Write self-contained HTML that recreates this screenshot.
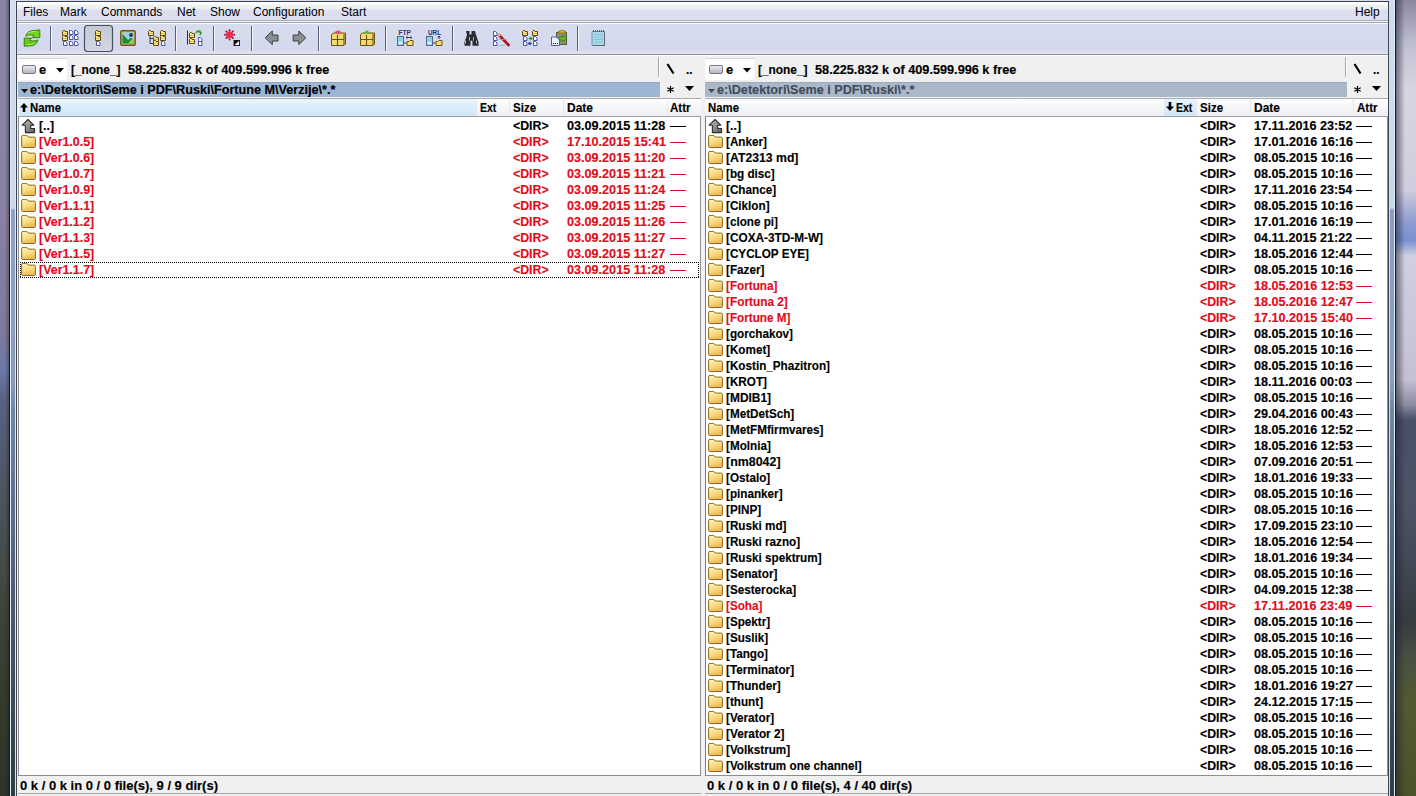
<!DOCTYPE html><html><head><meta charset='utf-8'><style>
*{margin:0;padding:0;box-sizing:border-box}
html,body{width:1416px;height:796px;overflow:hidden;position:relative;background:#808090;font-family:"Liberation Sans",sans-serif}
.a{position:absolute}
.t{position:absolute;white-space:pre;font:bold 13px/16px "Liberation Sans",sans-serif;color:#000;-webkit-text-stroke:0.15px currentColor}
.m{position:absolute;white-space:pre;font:12px/16px "Liberation Sans",sans-serif;color:#000}
.red{color:#e00c1c}
</style></head><body><svg width="0" height="0" style="position:absolute"><defs>
<linearGradient id="fg" x1="0" y1="0" x2="0.3" y2="1"><stop offset="0" stop-color="#fff3b0"/><stop offset="0.5" stop-color="#fbe08a"/><stop offset="1" stop-color="#f0bc58"/></linearGradient>
<linearGradient id="ag" x1="0" y1="0" x2="1" y2="1"><stop offset="0" stop-color="#c8c8c8"/><stop offset="1" stop-color="#5c5c5c"/></linearGradient>
<symbol id="fo" viewBox="0 0 15 14"><path d="M0.6 1.6Q0.6 0.4 1.8 0.4L5.8 0.4L7.3 2.1L13.2 2.1Q14.4 2.1 14.4 3.3L14.4 11.3Q14.4 12.5 13.2 12.5L1.8 12.5Q0.6 12.5 0.6 11.3Z" fill="url(#fg)" stroke="#8a6a2a" stroke-width="1"/></symbol>
<symbol id="up" viewBox="0 0 15 15"><path d="M7 0.5L1.2 6.2L4.4 6.2L4.4 13.6L13.6 13.6L13.6 9.5L9.7 9.5L9.7 6.2L12.8 6.2Z" fill="url(#ag)" stroke="#2e2e2e" stroke-width="1.1" stroke-linejoin="round"/></symbol>
</defs></svg>
<div class="a" style="left:0px;top:0px;width:9px;height:796px;background:linear-gradient(90deg,rgba(0,0,0,0) 5px,rgba(20,20,40,.35) 9px),linear-gradient(#8c84a4 0,#8a82a2 200px,#7e7a9a 330px,#6a78a8 372px,#5a6282 400px,#4e5664 480px,#464c48 560px,#3c4236 620px,#343a2c 700px,#2e3428 796px)"></div>
<div class="a" style="left:1396px;top:0px;width:20px;height:796px;background:linear-gradient(90deg,rgba(30,30,50,.55),rgba(30,30,50,0) 9px),linear-gradient(#8c88a0 0,#c0c0d2 45px,#d6d6e2 90px,#d0cede 190px,#8e9cd0 222px,#7890d0 240px,#d0d0e0 256px,#c4c0d4 380px,#8a8aa0 405px,#485068 420px,#4c5466 500px,#424a58 560px,#363c40 620px,#4a5040 660px,#525a32 700px,#4a5228 796px)"></div>
<div class="a" style="left:9px;top:0px;width:1px;height:796px;background:#141a28"></div>
<div class="a" style="left:1395px;top:0px;width:1px;height:796px;background:#141a28"></div>
<div class="a" style="left:10px;top:0px;width:6px;height:796px;background:linear-gradient(#d2deee 0,#ccd8ea 208px,#92a2c4 210px,#8a9cbe 380px,#7088a8 410px,#5e7290 500px,#485a6c 620px,#3a4a56 720px,#2e3c46 796px);border-left:1px solid #e4ecf8;border-right:1px solid #dce6f4"></div>
<div class="a" style="left:1389px;top:0px;width:6px;height:796px;background:linear-gradient(#cfdcee 0,#c8d8ec 208px,#8c9cc4 210px,#8aa0c0 380px,#7088a8 410px,#5e7290 500px,#485a6c 620px,#3a4a56 720px,#2e3c46 796px);border-left:1px solid #d0e0f4;border-right:1px solid #dcecf8"></div>
<div class="a" style="left:16px;top:1px;width:1373px;height:795px;background:#f0f0f0;border:1px solid #3c4650;border-bottom:none"></div>
<div class="a" style="left:17px;top:2px;width:1371px;height:18px;background:linear-gradient(#ffffff 0,#fcfdfc 2px,#f0f3f2 3px,#eef1f2 6px,#e0e2f1 8px,#dcdef0 10px,#dddff1 100%)"></div>
<div class="a" style="left:10px;top:0px;width:1385px;height:1px;background:#dadcf2"></div>
<div class="a" style="left:17px;top:20px;width:1371px;height:1px;background:#a8acb4"></div>
<div class="a" style="left:17px;top:21px;width:1371px;height:1px;background:#f4f6fa"></div>
<div class="a" style="left:17px;top:22px;width:1371px;height:1px;background:#9ea4ac"></div>
<div class="a" style="left:17px;top:23px;width:1371px;height:1px;background:#f8f9fc"></div>
<div class="m" style="left:23px;top:4px;">Files</div>
<div class="m" style="left:60px;top:4px;">Mark</div>
<div class="m" style="left:101px;top:4px;">Commands</div>
<div class="m" style="left:177px;top:4px;">Net</div>
<div class="m" style="left:210px;top:4px;">Show</div>
<div class="m" style="left:253px;top:4px;">Configuration</div>
<div class="m" style="left:341px;top:4px;">Start</div>
<div class="m" style="left:1355px;top:4px;">Help</div>
<div class="a" style="left:17px;top:24px;width:1371px;height:30px;background:linear-gradient(#d8dcef 0,#d4d8ec 85%,#dfe2ee 100%)"></div>
<div class="a" style="left:17px;top:54px;width:1371px;height:1px;background:#8c9098"></div>
<div class="a" style="left:17px;top:55px;width:1371px;height:1px;background:#ffffff"></div>
<svg class="a" style="left:0;top:0" width="640" height="56" viewBox="0 0 640 56"><path d="M25.8 36.2C26.8 32.2 30 30.4 34 30.6L39.8 29.9V37.7H32.2L34.2 35.6C31.2 34.4 28 34.8 25.8 36.2Z" fill="#74d41a" stroke="#3a8418" stroke-width="1" stroke-linejoin="round"/><path d="M24.2 38.1H31.6L29.6 40.3C32.6 41.4 35.6 41.2 38 39.8C37 44 33.6 46.2 29.6 45.9L24.2 46.2Z" fill="#66cc10" stroke="#3a8418" stroke-width="1" stroke-linejoin="round"/><path d="M28.5 33.2C30.5 31.8 33 31.5 36 31.6M26.5 44.5C29 44.8 32 44.5 34.5 43" stroke="#b4f060" stroke-width="1" fill="none"/><rect x="50" y="26" width="1" height="25" fill="#586078"/><rect x="51" y="26" width="1" height="25" fill="#f4f6fb"/><rect x="175" y="26" width="1" height="25" fill="#586078"/><rect x="176" y="26" width="1" height="25" fill="#f4f6fb"/><rect x="213" y="26" width="1" height="25" fill="#586078"/><rect x="214" y="26" width="1" height="25" fill="#f4f6fb"/><rect x="251" y="26" width="1" height="25" fill="#586078"/><rect x="252" y="26" width="1" height="25" fill="#f4f6fb"/><rect x="318" y="26" width="1" height="25" fill="#586078"/><rect x="319" y="26" width="1" height="25" fill="#f4f6fb"/><rect x="385" y="26" width="1" height="25" fill="#586078"/><rect x="386" y="26" width="1" height="25" fill="#f4f6fb"/><rect x="452" y="26" width="1" height="25" fill="#586078"/><rect x="453" y="26" width="1" height="25" fill="#f4f6fb"/><rect x="577" y="26" width="1" height="25" fill="#586078"/><rect x="578" y="26" width="1" height="25" fill="#f4f6fb"/><path d="M62.5 31.5V35.5H67.5V31.5H65L64.5 30.5H63.2Z" fill="#fde88a" stroke="#5e4a10" stroke-width="1" stroke-linejoin="miter"/><path d="M63 33.5h4" stroke="#d8b040" stroke-width=".8"/><path d="M62.5 36.5V40.5H67.5V36.5H65L64.5 35.5H63.2Z" fill="#fde88a" stroke="#5e4a10" stroke-width="1" stroke-linejoin="miter"/><path d="M63 38.5h4" stroke="#d8b040" stroke-width=".8"/><path d="M63.5 41.5H65.5L67 43V45.5H63.5Z" fill="#fff" stroke="#4a55a8" stroke-width="1" stroke-linejoin="miter"/><path d="M69.5 30.5H71.5L73 32V34.5H69.5Z" fill="#fff" stroke="#4a55a8" stroke-width="1" stroke-linejoin="miter"/><path d="M69.5 35.5H71.5L73 37V39.5H69.5Z" fill="#fff" stroke="#4a55a8" stroke-width="1" stroke-linejoin="miter"/><path d="M69.5 41.5H71.5L73 43V45.5H69.5Z" fill="#fff" stroke="#4a55a8" stroke-width="1" stroke-linejoin="miter"/><path d="M74.5 30.5H76.5L78 32V34.5H74.5Z" fill="#fff" stroke="#4a55a8" stroke-width="1" stroke-linejoin="miter"/><path d="M74.5 35.5H76.5L78 37V39.5H74.5Z" fill="#fff" stroke="#4a55a8" stroke-width="1" stroke-linejoin="miter"/><path d="M74.5 41.5H76.5L78 43V45.5H74.5Z" fill="#fff" stroke="#4a55a8" stroke-width="1" stroke-linejoin="miter"/><defs><linearGradient id="pb" x1="0" y1="0" x2="0" y2="1"><stop offset="0" stop-color="#c4c8d2"/><stop offset="1" stop-color="#d4d8e6"/></linearGradient></defs><rect x="84.5" y="25.5" width="28" height="26" rx="3" fill="url(#pb)" stroke="#4a5060" stroke-width="1.2"/><path d="M95.5 31.5V35.5H100.5V31.5H98L97.5 30.5H96.2Z" fill="#fde88a" stroke="#5e4a10" stroke-width="1" stroke-linejoin="miter"/><path d="M96 33.5h4" stroke="#d8b040" stroke-width=".8"/><path d="M95.5 36.5V40.5H100.5V36.5H98L97.5 35.5H96.2Z" fill="#fde88a" stroke="#5e4a10" stroke-width="1" stroke-linejoin="miter"/><path d="M96 38.5h4" stroke="#d8b040" stroke-width=".8"/><path d="M96.5 41.5H98.5L100 43V45.5H96.5Z" fill="#fff" stroke="#4a55a8" stroke-width="1" stroke-linejoin="miter"/><rect x="120.8" y="30.8" width="14.4" height="14.4" rx="1" fill="#d8c070" stroke="#6e5418" stroke-width="1.4"/><rect x="122.5" y="32.5" width="11" height="11" fill="#9ad0e8"/><path d="M122.5 34L128 40L131 37.5L133.5 40V43.5H122.5Z" fill="#1c8a2a"/><path d="M128 43.5L133.5 37.5V43.5Z" fill="#90d060"/><circle cx="131" cy="35" r="2" fill="#1a3f70"/><path d="M150 35.5V43.5M150 38.5h3M150 43.5h3" stroke="#3a3a3a" stroke-width="1" fill="none"/><path d="M148.5 31.5V35.5H153.5V31.5H151L150.5 30.5H149.2Z" fill="#fde88a" stroke="#5e4a10" stroke-width="1" stroke-linejoin="miter"/><path d="M149 33.5h4" stroke="#d8b040" stroke-width=".8"/><path d="M153.5 37.5V41.5H158.5V37.5H156L155.5 36.5H154.2Z" fill="#fde88a" stroke="#5e4a10" stroke-width="1" stroke-linejoin="miter"/><path d="M154 39.5h4" stroke="#d8b040" stroke-width=".8"/><path d="M153.5 41.5V45.5H158.5V41.5H156L155.5 40.5H154.2Z" fill="#fde88a" stroke="#5e4a10" stroke-width="1" stroke-linejoin="miter"/><path d="M154 43.5h4" stroke="#d8b040" stroke-width=".8"/><path d="M160.5 31.5V35.5H165.5V31.5H163L162.5 30.5H161.2Z" fill="#fde88a" stroke="#5e4a10" stroke-width="1" stroke-linejoin="miter"/><path d="M161 33.5h4" stroke="#d8b040" stroke-width=".8"/><path d="M160.5 36.5V40.5H165.5V36.5H163L162.5 35.5H161.2Z" fill="#fde88a" stroke="#5e4a10" stroke-width="1" stroke-linejoin="miter"/><path d="M161 38.5h4" stroke="#d8b040" stroke-width=".8"/><path d="M161.5 41.5H163.5L165 43V45.5H161.5Z" fill="#fff" stroke="#4a55a8" stroke-width="1" stroke-linejoin="miter"/><path d="M187.5 30.5V44.5" stroke="#303030" stroke-width="1"/><path d="M189.5 33.5V37.5H194.5V33.5H192L191.5 32.5H190.2Z" fill="#fde88a" stroke="#5e4a10" stroke-width="1" stroke-linejoin="miter"/><path d="M190 35.5h4" stroke="#d8b040" stroke-width=".8"/><path d="M189.5 39.5V43.5H194.5V39.5H192L191.5 38.5H190.2Z" fill="#fde88a" stroke="#5e4a10" stroke-width="1" stroke-linejoin="miter"/><path d="M190 41.5h4" stroke="#d8b040" stroke-width=".8"/><path d="M196 33c1-2 3-2.5 4.5-1.5M198.5 31.5l2.5 1 -1 2.5" stroke="#2a9a2a" stroke-width="1.6" fill="none"/><path d="M198.5 37.5H200.5L202 39V41.5H198.5Z" fill="#fff" stroke="#4a55a8" stroke-width="1" stroke-linejoin="miter"/><path d="M198.5 41.5H200.5L202 43V45.5H198.5Z" fill="#fff" stroke="#4a55a8" stroke-width="1" stroke-linejoin="miter"/><circle cx="229.6" cy="34.8" r="3.6" fill="#e0304a"/><circle cx="234.20" cy="34.80" r="1" fill="#a01030"/><circle cx="232.85" cy="38.05" r="1" fill="#a01030"/><circle cx="229.60" cy="39.40" r="1" fill="#a01030"/><circle cx="226.35" cy="38.05" r="1" fill="#a01030"/><circle cx="225.00" cy="34.80" r="1" fill="#a01030"/><circle cx="226.35" cy="31.55" r="1" fill="#a01030"/><circle cx="229.60" cy="30.20" r="1" fill="#a01030"/><circle cx="232.85" cy="31.55" r="1" fill="#a01030"/><rect x="234" y="40.5" width="5.5" height="5" fill="#fff" stroke="#202020" stroke-width="1"/><path d="M234 45.5V40.5H239.5Z" fill="#101010"/><path d="M265.2 37.8L272.3 31V35H278V41H272.3V44.6Z" fill="#8a8e8e" stroke="#3c4040" stroke-width="1"/><path d="M305.8 37.8L298.8 31V35H293.2V41H298.8V44.6Z" fill="#8a8e8e" stroke="#3c4040" stroke-width="1"/><path d="M331.5 34.5L333.5 33H345.5V44L344 45.5H331.5Z" fill="#f2d870" stroke="#6a5210" stroke-width="1"/><path d="M332 39.5H343.5M337.5 35V45.5M344 34V45" stroke="#6a5210" stroke-width="1.1"/><path d="M334.5 32L338 30.3L341.5 32L338 34.5Z" fill="#e84a70"/><path d="M360.5 34.5L362.5 33H374.5V44L373 45.5H360.5Z" fill="#f2d870" stroke="#6a5210" stroke-width="1"/><path d="M361 39.5H372.5M366.5 35V45.5M373 34V45" stroke="#6a5210" stroke-width="1.1"/><path d="M363.5 33.5L367 30L370.5 33.5Z" fill="#52c020"/><text x="398.5" y="34.8" font-family="Liberation Sans" font-weight="bold" font-size="6.5" fill="#4a2a6a" textLength="12.5" lengthAdjust="spacingAndGlyphs">FTP</text><text x="428" y="34.8" font-family="Liberation Sans" font-weight="bold" font-size="6.5" fill="#1a2a7a" textLength="13" lengthAdjust="spacingAndGlyphs">URL</text><rect x="397.5" y="36.5" width="6" height="9" fill="#8fd0ea" stroke="#4e6a86" stroke-width="1"/><rect x="398.5" y="42" width="4" height="2" fill="#e8f0f8"/><path d="M403.5 43H406.5" stroke="#40305a" stroke-width="1"/><path d="M407.0 41.5h2l1-1h3v5h-6z" fill="#f8e070" stroke="#6a5210" stroke-width="1"/><rect x="426.5" y="36.5" width="6" height="9" fill="#8fd0ea" stroke="#4e6a86" stroke-width="1"/><rect x="427.5" y="42" width="4" height="2" fill="#e8f0f8"/><path d="M432.5 43H435.5" stroke="#40305a" stroke-width="1"/><path d="M436.0 41.5h2l1-1h3v5h-6z" fill="#f8e070" stroke="#6a5210" stroke-width="1"/><path d="M406 37.5h6M406 37.5l1.5-1.2M406 37.5l1.5 1.2M412 37.5l-1.5-1.2M412 37.5l-1.5 1.2" stroke="#40305a" stroke-width=".9"/><path d="M439 36v3M437.5 37.5l1.5-1.5 1.5 1.5" stroke="#1a2a6a" stroke-width=".9" fill="none"/><path d="M466 31h3.5v3.5h2v-3.5h3.5l1 4 2.5 7v3.7h-6v-5h-2v5h-6v-3.7l2.5-7z" fill="#2a2c30"/><path d="M465.5 40.5v3M476.5 40.5v3M469.5 37v3.5M473.5 37v3.5" stroke="#d0d4dc" stroke-width=".8"/><path d="M493.5 31.5H495.5L497 33V35.5H493.5Z" fill="#fff" stroke="#4a55a8" stroke-width="1" stroke-linejoin="miter"/><path d="M493.5 36.5H495.5L497 38V40.5H493.5Z" fill="#fff" stroke="#4a55a8" stroke-width="1" stroke-linejoin="miter"/><path d="M493.5 41.5H495.5L497 43V45.5H493.5Z" fill="#fff" stroke="#4a55a8" stroke-width="1" stroke-linejoin="miter"/><path d="M499 35L508.5 45" stroke="#b01828" stroke-width="2.8" stroke-linecap="round"/><path d="M498.3 34.3L500 36" stroke="#e8c070" stroke-width="2.2"/><path d="M499 39.5h8M499 45.5h6" stroke="#9aa0b8" stroke-width=".7"/><path d="M522.5 31.5V35.5H527.5V31.5H525L524.5 30.5H523.2Z" fill="#fde88a" stroke="#5e4a10" stroke-width="1" stroke-linejoin="miter"/><path d="M523 33.5h4" stroke="#d8b040" stroke-width=".8"/><path d="M532.5 31.5V35.5H537.5V31.5H535L534.5 30.5H533.2Z" fill="#fde88a" stroke="#5e4a10" stroke-width="1" stroke-linejoin="miter"/><path d="M533 33.5h4" stroke="#d8b040" stroke-width=".8"/><path d="M523.5 36.5H525.5L527 38V40.5H523.5Z" fill="#fff" stroke="#4a55a8" stroke-width="1" stroke-linejoin="miter"/><path d="M533.5 36.5H535.5L537 38V40.5H533.5Z" fill="#fff" stroke="#4a55a8" stroke-width="1" stroke-linejoin="miter"/><path d="M523.5 41.5H525.5L527 43V45.5H523.5Z" fill="#fff" stroke="#4a55a8" stroke-width="1" stroke-linejoin="miter"/><path d="M533.5 41.5H535.5L537 43V45.5H533.5Z" fill="#fff" stroke="#4a55a8" stroke-width="1" stroke-linejoin="miter"/><path d="M528.5 38.5h3.5M530 37l2 1.5-2 1.5" stroke="#2a9a2a" stroke-width="1.2" fill="none"/><path d="M532 43.5h-3.5M530.5 42l-2 1.5 2 1.5" stroke="#2a4aaa" stroke-width="1.2" fill="none"/><rect x="556.5" y="32.5" width="10" height="12" fill="#8a9070" stroke="#5a5a40" stroke-width="1"/><path d="M558.5 33V31h2.5l.5-1h1l.5 1h2.5v2z" fill="#e8b840" stroke="#8a6a10" stroke-width=".8"/><path d="M559 37h4v-2l3.5 3.5-3.5 3.5v-2h-4z" fill="#58c020" stroke="#2a7a10" stroke-width=".7"/><path d="M551.5 37h5l3 3v5.5h-8z" fill="#eef2fb" stroke="#5060b0" stroke-width="1"/><path d="M553 43.5h1M555 43.5h1M557 43.5h1" stroke="#101010" stroke-width="1.2"/><path d="M592 31.5h12.5v14h-12.5z" fill="#aad8e8" stroke="#7a9aaa" stroke-width="1"/><path d="M604.5 31.5v14M593 45.5h11.5" stroke="#606a70" stroke-width="1"/><path d="M594 34.5h9M594 37h9M594 39.5h9M594 42h9" stroke="#88bcd0" stroke-width=".8"/><path d="M593 31h1M595 31h1M597 31h1M599 31h1M601 31h1M603 31h1" stroke="#404850" stroke-width="1.4"/></svg>
<div class="a" style="left:18px;top:58px;width:49px;height:22px;background:#fff;border-top:1px solid #d4d4d4;border-left:1px solid #fafafa"></div>
<div class="a" style="left:22px;top:65px;width:14px;height:9px;background:linear-gradient(#ecebf2,#b8b4c4);border:1px solid #77737f;border-radius:2px"></div>
<div class="t" style="left:39px;top:62px;">e</div>
<svg class="a" style="left:56px;top:68px" width="8" height="4.5"><path d="M0 0H8L4.0 4.5Z" fill="#000"/></svg>
<div class="t" style="left:71px;top:62px;transform:scaleX(0.914);transform-origin:0 0;">[_none_]</div>
<div class="t" style="left:128px;top:62px;transform:scaleX(0.977);transform-origin:0 0;">58.225.832 k of 409.599.996 k free</div>
<div class="a" style="left:658px;top:57px;width:1px;height:20px;background:#a8a8a8"></div>
<div class="a" style="left:659px;top:57px;width:1px;height:20px;background:#ffffff"></div>
<svg class="a" style="left:666px;top:63px" width="9" height="12"><path d="M1.5 1L7.5 10.5" stroke="#000" stroke-width="2.2"/></svg>
<div class="t" style="left:686px;top:62px;transform:scaleX(0.900);transform-origin:0 0;">..</div>
<div class="a" style="left:18px;top:82px;width:642px;height:15px;background:#9cb6d4;border-top:1px solid #90a8c6"></div>
<svg class="a" style="left:21px;top:89px" width="7" height="4"><path d="M0 0H7L3.5 4Z" fill="#000"/></svg>
<div class="t" style="left:30px;top:82px;color:#000;transform:scaleX(0.972);transform-origin:0 0;">e:\Detektori\Seme i PDF\Ruski\Fortune M\Verzije\*.*</div>
<svg class="a" style="left:666px;top:85px" width="9" height="9"><path d="M4.5 1V8M1.3 2.7L7.7 6.3M1.3 6.3L7.7 2.7" stroke="#000" stroke-width="1.2"/></svg>
<svg class="a" style="left:685px;top:86px" width="9" height="5"><path d="M0 0H9L4.5 5Z" fill="#000"/></svg>
<div class="a" style="left:18px;top:98px;width:683px;height:19px;background:linear-gradient(#fdfdfe,#eef0f3);border-top:1px solid #a8abb0;border-bottom:1px solid #9a9ea4"></div>
<div class="a" style="left:18px;top:117px;width:683px;height:659px;background:#fff;border:1px solid #8e8e8e;border-top:none"></div>
<div class="t" style="left:20px;top:778px;">0 k / 0 k in 0 / 0 file(s), 9 / 9 dir(s)</div>
<div class="a" style="left:18px;top:793px;width:683px;height:1px;background:#a4a4a4"></div>
<div class="a" style="left:705px;top:58px;width:49px;height:22px;background:#fff;border-top:1px solid #d4d4d4;border-left:1px solid #fafafa"></div>
<div class="a" style="left:709px;top:65px;width:14px;height:9px;background:linear-gradient(#ecebf2,#b8b4c4);border:1px solid #77737f;border-radius:2px"></div>
<div class="t" style="left:726px;top:62px;">e</div>
<svg class="a" style="left:743px;top:68px" width="8" height="4.5"><path d="M0 0H8L4.0 4.5Z" fill="#000"/></svg>
<div class="t" style="left:758px;top:62px;transform:scaleX(0.914);transform-origin:0 0;">[_none_]</div>
<div class="t" style="left:815px;top:62px;transform:scaleX(0.977);transform-origin:0 0;">58.225.832 k of 409.599.996 k free</div>
<div class="a" style="left:1345px;top:57px;width:1px;height:20px;background:#a8a8a8"></div>
<div class="a" style="left:1346px;top:57px;width:1px;height:20px;background:#ffffff"></div>
<svg class="a" style="left:1353px;top:63px" width="9" height="12"><path d="M1.5 1L7.5 10.5" stroke="#000" stroke-width="2.2"/></svg>
<div class="t" style="left:1373px;top:62px;transform:scaleX(0.900);transform-origin:0 0;">..</div>
<div class="a" style="left:705px;top:82px;width:642px;height:15px;background:#aab8c8;border-top:1px solid #9cabbc"></div>
<svg class="a" style="left:708px;top:89px" width="7" height="4"><path d="M0 0H7L3.5 4Z" fill="#3e4c5c"/></svg>
<div class="t" style="left:717px;top:82px;color:#3e4c5c;transform:scaleX(0.972);transform-origin:0 0;">e:\Detektori\Seme i PDF\Ruski\*.*</div>
<svg class="a" style="left:1353px;top:85px" width="9" height="9"><path d="M4.5 1V8M1.3 2.7L7.7 6.3M1.3 6.3L7.7 2.7" stroke="#000" stroke-width="1.2"/></svg>
<svg class="a" style="left:1372px;top:86px" width="9" height="5"><path d="M0 0H9L4.5 5Z" fill="#000"/></svg>
<div class="a" style="left:705px;top:98px;width:683px;height:19px;background:linear-gradient(#fdfdfe,#eef0f3);border-top:1px solid #a8abb0;border-bottom:1px solid #9a9ea4"></div>
<div class="a" style="left:705px;top:117px;width:683px;height:659px;background:#fff;border:1px solid #8e8e8e;border-top:none"></div>
<div class="t" style="left:707px;top:778px;">0 k / 0 k in 0 / 0 file(s), 4 / 40 dir(s)</div>
<div class="a" style="left:705px;top:793px;width:683px;height:1px;background:#a4a4a4"></div>
<div class="a" style="left:705px;top:117px;width:1px;height:659px;background:#747c92"></div>
<div class="a" style="left:19px;top:99px;width:457px;height:17px;background:linear-gradient(#e8f4fd,#cfe6f7)"></div>
<div class="a" style="left:1164px;top:99px;width:32px;height:17px;background:linear-gradient(#e8f4fd,#cfe6f7)"></div>
<div class="a" style="left:476px;top:100px;width:1px;height:15px;background:#e4e8ee"></div>
<div class="a" style="left:509px;top:100px;width:1px;height:15px;background:#e4e8ee"></div>
<div class="a" style="left:563px;top:100px;width:1px;height:15px;background:#e4e8ee"></div>
<div class="a" style="left:667px;top:100px;width:1px;height:15px;background:#e4e8ee"></div>
<div class="a" style="left:1164px;top:100px;width:1px;height:15px;background:#e4e8ee"></div>
<div class="a" style="left:1196px;top:100px;width:1px;height:15px;background:#e4e8ee"></div>
<div class="a" style="left:1250px;top:100px;width:1px;height:15px;background:#e4e8ee"></div>
<div class="a" style="left:1353px;top:100px;width:1px;height:15px;background:#e4e8ee"></div>
<svg class="a" style="left:20px;top:103px" width="8" height="9"><path d="M4 0L8 4.5H5.3V9H2.7V4.5H0Z" fill="#000"/></svg>
<svg class="a" style="left:1166px;top:102px" width="8" height="9"><path d="M4 9L8 4.5H5.3V0H2.7V4.5H0Z" fill="#000"/></svg>
<div class="t" style="left:30px;top:100px;transform:scaleX(0.875);transform-origin:0 0;">Name</div>
<div class="t" style="left:480px;top:100px;transform:scaleX(0.806);transform-origin:0 0;">Ext</div>
<div class="t" style="left:513px;top:100px;transform:scaleX(0.890);transform-origin:0 0;">Size</div>
<div class="t" style="left:567px;top:100px;transform:scaleX(0.920);transform-origin:0 0;">Date</div>
<div class="t" style="left:670px;top:100px;transform:scaleX(0.890);transform-origin:0 0;">Attr</div>
<div class="t" style="left:708px;top:100px;transform:scaleX(0.875);transform-origin:0 0;">Name</div>
<div class="t" style="left:1176px;top:100px;transform:scaleX(0.806);transform-origin:0 0;">Ext</div>
<div class="t" style="left:1200px;top:100px;transform:scaleX(0.890);transform-origin:0 0;">Size</div>
<div class="t" style="left:1254px;top:100px;transform:scaleX(0.920);transform-origin:0 0;">Date</div>
<div class="t" style="left:1357px;top:100px;transform:scaleX(0.890);transform-origin:0 0;">Attr</div>
<div class="a" style="left:20px;top:262px;width:679px;height:1px;background:repeating-linear-gradient(90deg,#000 0 1px,transparent 1px 2px)"></div>
<div class="a" style="left:20px;top:277px;width:679px;height:1px;background:repeating-linear-gradient(90deg,#000 0 1px,transparent 1px 2px)"></div>
<div class="a" style="left:20px;top:262px;width:1px;height:16px;background:repeating-linear-gradient(#000 0 1px,transparent 1px 2px)"></div>
<div class="a" style="left:698px;top:262px;width:1px;height:16px;background:repeating-linear-gradient(#000 0 1px,transparent 1px 2px)"></div>
<svg class="a" style="left:21px;top:119px" width="15" height="15"><use href="#up"/></svg>
<div class="t" style="left:39px;top:118px;transform:scaleX(0.950);transform-origin:0 0;">[..]</div>
<div class="t" style="left:513px;top:118px;transform:scaleX(0.947);transform-origin:0 0;">&lt;DIR&gt;</div>
<div class="t" style="left:567px;top:118px;transform:scaleX(0.971);transform-origin:0 0;">03.09.2015 11:28</div>
<div class="a" style="left:670px;top:126px;width:16px;height:1px;background:#000"></div>
<svg class="a" style="left:21px;top:135px" width="15" height="14"><use href="#fo"/></svg>
<div class="t red" style="left:39px;top:134px;transform:scaleX(0.955);transform-origin:0 0;">[Ver1.0.5]</div>
<div class="t red" style="left:513px;top:134px;transform:scaleX(0.947);transform-origin:0 0;">&lt;DIR&gt;</div>
<div class="t red" style="left:567px;top:134px;transform:scaleX(0.971);transform-origin:0 0;">17.10.2015 15:41</div>
<div class="a" style="left:670px;top:142px;width:16px;height:1px;background:#e00c1c"></div>
<svg class="a" style="left:21px;top:151px" width="15" height="14"><use href="#fo"/></svg>
<div class="t red" style="left:39px;top:150px;transform:scaleX(0.955);transform-origin:0 0;">[Ver1.0.6]</div>
<div class="t red" style="left:513px;top:150px;transform:scaleX(0.947);transform-origin:0 0;">&lt;DIR&gt;</div>
<div class="t red" style="left:567px;top:150px;transform:scaleX(0.971);transform-origin:0 0;">03.09.2015 11:20</div>
<div class="a" style="left:670px;top:158px;width:16px;height:1px;background:#e00c1c"></div>
<svg class="a" style="left:21px;top:167px" width="15" height="14"><use href="#fo"/></svg>
<div class="t red" style="left:39px;top:166px;transform:scaleX(0.955);transform-origin:0 0;">[Ver1.0.7]</div>
<div class="t red" style="left:513px;top:166px;transform:scaleX(0.947);transform-origin:0 0;">&lt;DIR&gt;</div>
<div class="t red" style="left:567px;top:166px;transform:scaleX(0.971);transform-origin:0 0;">03.09.2015 11:21</div>
<div class="a" style="left:670px;top:174px;width:16px;height:1px;background:#e00c1c"></div>
<svg class="a" style="left:21px;top:183px" width="15" height="14"><use href="#fo"/></svg>
<div class="t red" style="left:39px;top:182px;transform:scaleX(0.955);transform-origin:0 0;">[Ver1.0.9]</div>
<div class="t red" style="left:513px;top:182px;transform:scaleX(0.947);transform-origin:0 0;">&lt;DIR&gt;</div>
<div class="t red" style="left:567px;top:182px;transform:scaleX(0.971);transform-origin:0 0;">03.09.2015 11:24</div>
<div class="a" style="left:670px;top:190px;width:16px;height:1px;background:#e00c1c"></div>
<svg class="a" style="left:21px;top:199px" width="15" height="14"><use href="#fo"/></svg>
<div class="t red" style="left:39px;top:198px;transform:scaleX(0.955);transform-origin:0 0;">[Ver1.1.1]</div>
<div class="t red" style="left:513px;top:198px;transform:scaleX(0.947);transform-origin:0 0;">&lt;DIR&gt;</div>
<div class="t red" style="left:567px;top:198px;transform:scaleX(0.971);transform-origin:0 0;">03.09.2015 11:25</div>
<div class="a" style="left:670px;top:206px;width:16px;height:1px;background:#e00c1c"></div>
<svg class="a" style="left:21px;top:215px" width="15" height="14"><use href="#fo"/></svg>
<div class="t red" style="left:39px;top:214px;transform:scaleX(0.955);transform-origin:0 0;">[Ver1.1.2]</div>
<div class="t red" style="left:513px;top:214px;transform:scaleX(0.947);transform-origin:0 0;">&lt;DIR&gt;</div>
<div class="t red" style="left:567px;top:214px;transform:scaleX(0.971);transform-origin:0 0;">03.09.2015 11:26</div>
<div class="a" style="left:670px;top:222px;width:16px;height:1px;background:#e00c1c"></div>
<svg class="a" style="left:21px;top:231px" width="15" height="14"><use href="#fo"/></svg>
<div class="t red" style="left:39px;top:230px;transform:scaleX(0.955);transform-origin:0 0;">[Ver1.1.3]</div>
<div class="t red" style="left:513px;top:230px;transform:scaleX(0.947);transform-origin:0 0;">&lt;DIR&gt;</div>
<div class="t red" style="left:567px;top:230px;transform:scaleX(0.971);transform-origin:0 0;">03.09.2015 11:27</div>
<div class="a" style="left:670px;top:238px;width:16px;height:1px;background:#e00c1c"></div>
<svg class="a" style="left:21px;top:247px" width="15" height="14"><use href="#fo"/></svg>
<div class="t red" style="left:39px;top:246px;transform:scaleX(0.955);transform-origin:0 0;">[Ver1.1.5]</div>
<div class="t red" style="left:513px;top:246px;transform:scaleX(0.947);transform-origin:0 0;">&lt;DIR&gt;</div>
<div class="t red" style="left:567px;top:246px;transform:scaleX(0.971);transform-origin:0 0;">03.09.2015 11:27</div>
<div class="a" style="left:670px;top:254px;width:16px;height:1px;background:#e00c1c"></div>
<svg class="a" style="left:21px;top:263px" width="15" height="14"><use href="#fo"/></svg>
<div class="t red" style="left:39px;top:262px;transform:scaleX(0.955);transform-origin:0 0;">[Ver1.1.7]</div>
<div class="t red" style="left:513px;top:262px;transform:scaleX(0.947);transform-origin:0 0;">&lt;DIR&gt;</div>
<div class="t red" style="left:567px;top:262px;transform:scaleX(0.971);transform-origin:0 0;">03.09.2015 11:28</div>
<div class="a" style="left:670px;top:270px;width:16px;height:1px;background:#e00c1c"></div>
<svg class="a" style="left:708px;top:119px" width="15" height="15"><use href="#up"/></svg>
<div class="t" style="left:726px;top:118px;transform:scaleX(0.950);transform-origin:0 0;">[..]</div>
<div class="t" style="left:1200px;top:118px;transform:scaleX(0.947);transform-origin:0 0;">&lt;DIR&gt;</div>
<div class="t" style="left:1254px;top:118px;transform:scaleX(0.971);transform-origin:0 0;">17.11.2016 23:52</div>
<div class="a" style="left:1356px;top:126px;width:16px;height:1px;background:#000"></div>
<svg class="a" style="left:708px;top:135px" width="15" height="14"><use href="#fo"/></svg>
<div class="t" style="left:726px;top:134px;transform:scaleX(0.900);transform-origin:0 0;">[Anker]</div>
<div class="t" style="left:1200px;top:134px;transform:scaleX(0.947);transform-origin:0 0;">&lt;DIR&gt;</div>
<div class="t" style="left:1254px;top:134px;transform:scaleX(0.971);transform-origin:0 0;">17.01.2016 16:16</div>
<div class="a" style="left:1356px;top:142px;width:16px;height:1px;background:#000"></div>
<svg class="a" style="left:708px;top:151px" width="15" height="14"><use href="#fo"/></svg>
<div class="t" style="left:726px;top:150px;transform:scaleX(0.940);transform-origin:0 0;">[AT2313 md]</div>
<div class="t" style="left:1200px;top:150px;transform:scaleX(0.947);transform-origin:0 0;">&lt;DIR&gt;</div>
<div class="t" style="left:1254px;top:150px;transform:scaleX(0.971);transform-origin:0 0;">08.05.2015 10:16</div>
<div class="a" style="left:1356px;top:158px;width:16px;height:1px;background:#000"></div>
<svg class="a" style="left:708px;top:167px" width="15" height="14"><use href="#fo"/></svg>
<div class="t" style="left:726px;top:166px;transform:scaleX(0.900);transform-origin:0 0;">[bg disc]</div>
<div class="t" style="left:1200px;top:166px;transform:scaleX(0.947);transform-origin:0 0;">&lt;DIR&gt;</div>
<div class="t" style="left:1254px;top:166px;transform:scaleX(0.971);transform-origin:0 0;">08.05.2015 10:16</div>
<div class="a" style="left:1356px;top:174px;width:16px;height:1px;background:#000"></div>
<svg class="a" style="left:708px;top:183px" width="15" height="14"><use href="#fo"/></svg>
<div class="t" style="left:726px;top:182px;transform:scaleX(0.900);transform-origin:0 0;">[Chance]</div>
<div class="t" style="left:1200px;top:182px;transform:scaleX(0.947);transform-origin:0 0;">&lt;DIR&gt;</div>
<div class="t" style="left:1254px;top:182px;transform:scaleX(0.971);transform-origin:0 0;">17.11.2016 23:54</div>
<div class="a" style="left:1356px;top:190px;width:16px;height:1px;background:#000"></div>
<svg class="a" style="left:708px;top:199px" width="15" height="14"><use href="#fo"/></svg>
<div class="t" style="left:726px;top:198px;transform:scaleX(0.900);transform-origin:0 0;">[Ciklon]</div>
<div class="t" style="left:1200px;top:198px;transform:scaleX(0.947);transform-origin:0 0;">&lt;DIR&gt;</div>
<div class="t" style="left:1254px;top:198px;transform:scaleX(0.971);transform-origin:0 0;">08.05.2015 10:16</div>
<div class="a" style="left:1356px;top:206px;width:16px;height:1px;background:#000"></div>
<svg class="a" style="left:708px;top:215px" width="15" height="14"><use href="#fo"/></svg>
<div class="t" style="left:726px;top:214px;transform:scaleX(0.900);transform-origin:0 0;">[clone pi]</div>
<div class="t" style="left:1200px;top:214px;transform:scaleX(0.947);transform-origin:0 0;">&lt;DIR&gt;</div>
<div class="t" style="left:1254px;top:214px;transform:scaleX(0.971);transform-origin:0 0;">17.01.2016 16:19</div>
<div class="a" style="left:1356px;top:222px;width:16px;height:1px;background:#000"></div>
<svg class="a" style="left:708px;top:231px" width="15" height="14"><use href="#fo"/></svg>
<div class="t" style="left:726px;top:230px;transform:scaleX(0.908);transform-origin:0 0;">[COXA-3TD-M-W]</div>
<div class="t" style="left:1200px;top:230px;transform:scaleX(0.947);transform-origin:0 0;">&lt;DIR&gt;</div>
<div class="t" style="left:1254px;top:230px;transform:scaleX(0.971);transform-origin:0 0;">04.11.2015 21:22</div>
<div class="a" style="left:1356px;top:238px;width:16px;height:1px;background:#000"></div>
<svg class="a" style="left:708px;top:247px" width="15" height="14"><use href="#fo"/></svg>
<div class="t" style="left:726px;top:246px;transform:scaleX(0.900);transform-origin:0 0;">[CYCLOP EYE]</div>
<div class="t" style="left:1200px;top:246px;transform:scaleX(0.947);transform-origin:0 0;">&lt;DIR&gt;</div>
<div class="t" style="left:1254px;top:246px;transform:scaleX(0.971);transform-origin:0 0;">18.05.2016 12:44</div>
<div class="a" style="left:1356px;top:254px;width:16px;height:1px;background:#000"></div>
<svg class="a" style="left:708px;top:263px" width="15" height="14"><use href="#fo"/></svg>
<div class="t" style="left:726px;top:262px;transform:scaleX(0.900);transform-origin:0 0;">[Fazer]</div>
<div class="t" style="left:1200px;top:262px;transform:scaleX(0.947);transform-origin:0 0;">&lt;DIR&gt;</div>
<div class="t" style="left:1254px;top:262px;transform:scaleX(0.971);transform-origin:0 0;">08.05.2015 10:16</div>
<div class="a" style="left:1356px;top:270px;width:16px;height:1px;background:#000"></div>
<svg class="a" style="left:708px;top:279px" width="15" height="14"><use href="#fo"/></svg>
<div class="t red" style="left:726px;top:278px;transform:scaleX(0.900);transform-origin:0 0;">[Fortuna]</div>
<div class="t red" style="left:1200px;top:278px;transform:scaleX(0.947);transform-origin:0 0;">&lt;DIR&gt;</div>
<div class="t red" style="left:1254px;top:278px;transform:scaleX(0.971);transform-origin:0 0;">18.05.2016 12:53</div>
<div class="a" style="left:1356px;top:286px;width:16px;height:1px;background:#e00c1c"></div>
<svg class="a" style="left:708px;top:295px" width="15" height="14"><use href="#fo"/></svg>
<div class="t red" style="left:726px;top:294px;transform:scaleX(0.910);transform-origin:0 0;">[Fortuna 2]</div>
<div class="t red" style="left:1200px;top:294px;transform:scaleX(0.947);transform-origin:0 0;">&lt;DIR&gt;</div>
<div class="t red" style="left:1254px;top:294px;transform:scaleX(0.971);transform-origin:0 0;">18.05.2016 12:47</div>
<div class="a" style="left:1356px;top:302px;width:16px;height:1px;background:#e00c1c"></div>
<svg class="a" style="left:708px;top:311px" width="15" height="14"><use href="#fo"/></svg>
<div class="t red" style="left:726px;top:310px;transform:scaleX(0.900);transform-origin:0 0;">[Fortune M]</div>
<div class="t red" style="left:1200px;top:310px;transform:scaleX(0.947);transform-origin:0 0;">&lt;DIR&gt;</div>
<div class="t red" style="left:1254px;top:310px;transform:scaleX(0.971);transform-origin:0 0;">17.10.2015 15:40</div>
<div class="a" style="left:1356px;top:318px;width:16px;height:1px;background:#e00c1c"></div>
<svg class="a" style="left:708px;top:327px" width="15" height="14"><use href="#fo"/></svg>
<div class="t" style="left:726px;top:326px;transform:scaleX(0.900);transform-origin:0 0;">[gorchakov]</div>
<div class="t" style="left:1200px;top:326px;transform:scaleX(0.947);transform-origin:0 0;">&lt;DIR&gt;</div>
<div class="t" style="left:1254px;top:326px;transform:scaleX(0.971);transform-origin:0 0;">08.05.2015 10:16</div>
<div class="a" style="left:1356px;top:334px;width:16px;height:1px;background:#000"></div>
<svg class="a" style="left:708px;top:343px" width="15" height="14"><use href="#fo"/></svg>
<div class="t" style="left:726px;top:342px;transform:scaleX(0.900);transform-origin:0 0;">[Komet]</div>
<div class="t" style="left:1200px;top:342px;transform:scaleX(0.947);transform-origin:0 0;">&lt;DIR&gt;</div>
<div class="t" style="left:1254px;top:342px;transform:scaleX(0.971);transform-origin:0 0;">08.05.2015 10:16</div>
<div class="a" style="left:1356px;top:350px;width:16px;height:1px;background:#000"></div>
<svg class="a" style="left:708px;top:359px" width="15" height="14"><use href="#fo"/></svg>
<div class="t" style="left:726px;top:358px;transform:scaleX(0.900);transform-origin:0 0;">[Kostin_Phazitron]</div>
<div class="t" style="left:1200px;top:358px;transform:scaleX(0.947);transform-origin:0 0;">&lt;DIR&gt;</div>
<div class="t" style="left:1254px;top:358px;transform:scaleX(0.971);transform-origin:0 0;">08.05.2015 10:16</div>
<div class="a" style="left:1356px;top:366px;width:16px;height:1px;background:#000"></div>
<svg class="a" style="left:708px;top:375px" width="15" height="14"><use href="#fo"/></svg>
<div class="t" style="left:726px;top:374px;transform:scaleX(0.900);transform-origin:0 0;">[KROT]</div>
<div class="t" style="left:1200px;top:374px;transform:scaleX(0.947);transform-origin:0 0;">&lt;DIR&gt;</div>
<div class="t" style="left:1254px;top:374px;transform:scaleX(0.971);transform-origin:0 0;">18.11.2016 00:03</div>
<div class="a" style="left:1356px;top:382px;width:16px;height:1px;background:#000"></div>
<svg class="a" style="left:708px;top:391px" width="15" height="14"><use href="#fo"/></svg>
<div class="t" style="left:726px;top:390px;transform:scaleX(0.916);transform-origin:0 0;">[MDIB1]</div>
<div class="t" style="left:1200px;top:390px;transform:scaleX(0.947);transform-origin:0 0;">&lt;DIR&gt;</div>
<div class="t" style="left:1254px;top:390px;transform:scaleX(0.971);transform-origin:0 0;">08.05.2015 10:16</div>
<div class="a" style="left:1356px;top:398px;width:16px;height:1px;background:#000"></div>
<svg class="a" style="left:708px;top:407px" width="15" height="14"><use href="#fo"/></svg>
<div class="t" style="left:726px;top:406px;transform:scaleX(0.900);transform-origin:0 0;">[MetDetSch]</div>
<div class="t" style="left:1200px;top:406px;transform:scaleX(0.947);transform-origin:0 0;">&lt;DIR&gt;</div>
<div class="t" style="left:1254px;top:406px;transform:scaleX(0.971);transform-origin:0 0;">29.04.2016 00:43</div>
<div class="a" style="left:1356px;top:414px;width:16px;height:1px;background:#000"></div>
<svg class="a" style="left:708px;top:423px" width="15" height="14"><use href="#fo"/></svg>
<div class="t" style="left:726px;top:422px;transform:scaleX(0.900);transform-origin:0 0;">[MetFMfirmvares]</div>
<div class="t" style="left:1200px;top:422px;transform:scaleX(0.947);transform-origin:0 0;">&lt;DIR&gt;</div>
<div class="t" style="left:1254px;top:422px;transform:scaleX(0.971);transform-origin:0 0;">18.05.2016 12:52</div>
<div class="a" style="left:1356px;top:430px;width:16px;height:1px;background:#000"></div>
<svg class="a" style="left:708px;top:439px" width="15" height="14"><use href="#fo"/></svg>
<div class="t" style="left:726px;top:438px;transform:scaleX(0.900);transform-origin:0 0;">[Molnia]</div>
<div class="t" style="left:1200px;top:438px;transform:scaleX(0.947);transform-origin:0 0;">&lt;DIR&gt;</div>
<div class="t" style="left:1254px;top:438px;transform:scaleX(0.971);transform-origin:0 0;">18.05.2016 12:53</div>
<div class="a" style="left:1356px;top:446px;width:16px;height:1px;background:#000"></div>
<svg class="a" style="left:708px;top:455px" width="15" height="14"><use href="#fo"/></svg>
<div class="t" style="left:726px;top:454px;transform:scaleX(0.955);transform-origin:0 0;">[nm8042]</div>
<div class="t" style="left:1200px;top:454px;transform:scaleX(0.947);transform-origin:0 0;">&lt;DIR&gt;</div>
<div class="t" style="left:1254px;top:454px;transform:scaleX(0.971);transform-origin:0 0;">07.09.2016 20:51</div>
<div class="a" style="left:1356px;top:462px;width:16px;height:1px;background:#000"></div>
<svg class="a" style="left:708px;top:471px" width="15" height="14"><use href="#fo"/></svg>
<div class="t" style="left:726px;top:470px;transform:scaleX(0.900);transform-origin:0 0;">[Ostalo]</div>
<div class="t" style="left:1200px;top:470px;transform:scaleX(0.947);transform-origin:0 0;">&lt;DIR&gt;</div>
<div class="t" style="left:1254px;top:470px;transform:scaleX(0.971);transform-origin:0 0;">18.01.2016 19:33</div>
<div class="a" style="left:1356px;top:478px;width:16px;height:1px;background:#000"></div>
<svg class="a" style="left:708px;top:487px" width="15" height="14"><use href="#fo"/></svg>
<div class="t" style="left:726px;top:486px;transform:scaleX(0.900);transform-origin:0 0;">[pinanker]</div>
<div class="t" style="left:1200px;top:486px;transform:scaleX(0.947);transform-origin:0 0;">&lt;DIR&gt;</div>
<div class="t" style="left:1254px;top:486px;transform:scaleX(0.971);transform-origin:0 0;">08.05.2015 10:16</div>
<div class="a" style="left:1356px;top:494px;width:16px;height:1px;background:#000"></div>
<svg class="a" style="left:708px;top:503px" width="15" height="14"><use href="#fo"/></svg>
<div class="t" style="left:726px;top:502px;transform:scaleX(0.900);transform-origin:0 0;">[PINP]</div>
<div class="t" style="left:1200px;top:502px;transform:scaleX(0.947);transform-origin:0 0;">&lt;DIR&gt;</div>
<div class="t" style="left:1254px;top:502px;transform:scaleX(0.971);transform-origin:0 0;">08.05.2015 10:16</div>
<div class="a" style="left:1356px;top:510px;width:16px;height:1px;background:#000"></div>
<svg class="a" style="left:708px;top:519px" width="15" height="14"><use href="#fo"/></svg>
<div class="t" style="left:726px;top:518px;transform:scaleX(0.900);transform-origin:0 0;">[Ruski md]</div>
<div class="t" style="left:1200px;top:518px;transform:scaleX(0.947);transform-origin:0 0;">&lt;DIR&gt;</div>
<div class="t" style="left:1254px;top:518px;transform:scaleX(0.971);transform-origin:0 0;">17.09.2015 23:10</div>
<div class="a" style="left:1356px;top:526px;width:16px;height:1px;background:#000"></div>
<svg class="a" style="left:708px;top:535px" width="15" height="14"><use href="#fo"/></svg>
<div class="t" style="left:726px;top:534px;transform:scaleX(0.900);transform-origin:0 0;">[Ruski razno]</div>
<div class="t" style="left:1200px;top:534px;transform:scaleX(0.947);transform-origin:0 0;">&lt;DIR&gt;</div>
<div class="t" style="left:1254px;top:534px;transform:scaleX(0.971);transform-origin:0 0;">18.05.2016 12:54</div>
<div class="a" style="left:1356px;top:542px;width:16px;height:1px;background:#000"></div>
<svg class="a" style="left:708px;top:551px" width="15" height="14"><use href="#fo"/></svg>
<div class="t" style="left:726px;top:550px;transform:scaleX(0.900);transform-origin:0 0;">[Ruski spektrum]</div>
<div class="t" style="left:1200px;top:550px;transform:scaleX(0.947);transform-origin:0 0;">&lt;DIR&gt;</div>
<div class="t" style="left:1254px;top:550px;transform:scaleX(0.971);transform-origin:0 0;">18.01.2016 19:34</div>
<div class="a" style="left:1356px;top:558px;width:16px;height:1px;background:#000"></div>
<svg class="a" style="left:708px;top:567px" width="15" height="14"><use href="#fo"/></svg>
<div class="t" style="left:726px;top:566px;transform:scaleX(0.900);transform-origin:0 0;">[Senator]</div>
<div class="t" style="left:1200px;top:566px;transform:scaleX(0.947);transform-origin:0 0;">&lt;DIR&gt;</div>
<div class="t" style="left:1254px;top:566px;transform:scaleX(0.971);transform-origin:0 0;">08.05.2015 10:16</div>
<div class="a" style="left:1356px;top:574px;width:16px;height:1px;background:#000"></div>
<svg class="a" style="left:708px;top:583px" width="15" height="14"><use href="#fo"/></svg>
<div class="t" style="left:726px;top:582px;transform:scaleX(0.900);transform-origin:0 0;">[Sesterocka]</div>
<div class="t" style="left:1200px;top:582px;transform:scaleX(0.947);transform-origin:0 0;">&lt;DIR&gt;</div>
<div class="t" style="left:1254px;top:582px;transform:scaleX(0.971);transform-origin:0 0;">04.09.2015 12:38</div>
<div class="a" style="left:1356px;top:590px;width:16px;height:1px;background:#000"></div>
<svg class="a" style="left:708px;top:599px" width="15" height="14"><use href="#fo"/></svg>
<div class="t red" style="left:726px;top:598px;transform:scaleX(0.900);transform-origin:0 0;">[Soha]</div>
<div class="t red" style="left:1200px;top:598px;transform:scaleX(0.947);transform-origin:0 0;">&lt;DIR&gt;</div>
<div class="t red" style="left:1254px;top:598px;transform:scaleX(0.971);transform-origin:0 0;">17.11.2016 23:49</div>
<div class="a" style="left:1356px;top:606px;width:16px;height:1px;background:#e00c1c"></div>
<svg class="a" style="left:708px;top:615px" width="15" height="14"><use href="#fo"/></svg>
<div class="t" style="left:726px;top:614px;transform:scaleX(0.900);transform-origin:0 0;">[Spektr]</div>
<div class="t" style="left:1200px;top:614px;transform:scaleX(0.947);transform-origin:0 0;">&lt;DIR&gt;</div>
<div class="t" style="left:1254px;top:614px;transform:scaleX(0.971);transform-origin:0 0;">08.05.2015 10:16</div>
<div class="a" style="left:1356px;top:622px;width:16px;height:1px;background:#000"></div>
<svg class="a" style="left:708px;top:631px" width="15" height="14"><use href="#fo"/></svg>
<div class="t" style="left:726px;top:630px;transform:scaleX(0.900);transform-origin:0 0;">[Suslik]</div>
<div class="t" style="left:1200px;top:630px;transform:scaleX(0.947);transform-origin:0 0;">&lt;DIR&gt;</div>
<div class="t" style="left:1254px;top:630px;transform:scaleX(0.971);transform-origin:0 0;">08.05.2015 10:16</div>
<div class="a" style="left:1356px;top:638px;width:16px;height:1px;background:#000"></div>
<svg class="a" style="left:708px;top:647px" width="15" height="14"><use href="#fo"/></svg>
<div class="t" style="left:726px;top:646px;transform:scaleX(0.900);transform-origin:0 0;">[Tango]</div>
<div class="t" style="left:1200px;top:646px;transform:scaleX(0.947);transform-origin:0 0;">&lt;DIR&gt;</div>
<div class="t" style="left:1254px;top:646px;transform:scaleX(0.971);transform-origin:0 0;">08.05.2015 10:16</div>
<div class="a" style="left:1356px;top:654px;width:16px;height:1px;background:#000"></div>
<svg class="a" style="left:708px;top:663px" width="15" height="14"><use href="#fo"/></svg>
<div class="t" style="left:726px;top:662px;transform:scaleX(0.900);transform-origin:0 0;">[Terminator]</div>
<div class="t" style="left:1200px;top:662px;transform:scaleX(0.947);transform-origin:0 0;">&lt;DIR&gt;</div>
<div class="t" style="left:1254px;top:662px;transform:scaleX(0.971);transform-origin:0 0;">08.05.2015 10:16</div>
<div class="a" style="left:1356px;top:670px;width:16px;height:1px;background:#000"></div>
<svg class="a" style="left:708px;top:679px" width="15" height="14"><use href="#fo"/></svg>
<div class="t" style="left:726px;top:678px;transform:scaleX(0.900);transform-origin:0 0;">[Thunder]</div>
<div class="t" style="left:1200px;top:678px;transform:scaleX(0.947);transform-origin:0 0;">&lt;DIR&gt;</div>
<div class="t" style="left:1254px;top:678px;transform:scaleX(0.971);transform-origin:0 0;">18.01.2016 19:27</div>
<div class="a" style="left:1356px;top:686px;width:16px;height:1px;background:#000"></div>
<svg class="a" style="left:708px;top:695px" width="15" height="14"><use href="#fo"/></svg>
<div class="t" style="left:726px;top:694px;transform:scaleX(0.900);transform-origin:0 0;">[thunt]</div>
<div class="t" style="left:1200px;top:694px;transform:scaleX(0.947);transform-origin:0 0;">&lt;DIR&gt;</div>
<div class="t" style="left:1254px;top:694px;transform:scaleX(0.971);transform-origin:0 0;">24.12.2015 17:15</div>
<div class="a" style="left:1356px;top:702px;width:16px;height:1px;background:#000"></div>
<svg class="a" style="left:708px;top:711px" width="15" height="14"><use href="#fo"/></svg>
<div class="t" style="left:726px;top:710px;transform:scaleX(0.900);transform-origin:0 0;">[Verator]</div>
<div class="t" style="left:1200px;top:710px;transform:scaleX(0.947);transform-origin:0 0;">&lt;DIR&gt;</div>
<div class="t" style="left:1254px;top:710px;transform:scaleX(0.971);transform-origin:0 0;">08.05.2015 10:16</div>
<div class="a" style="left:1356px;top:718px;width:16px;height:1px;background:#000"></div>
<svg class="a" style="left:708px;top:727px" width="15" height="14"><use href="#fo"/></svg>
<div class="t" style="left:726px;top:726px;transform:scaleX(0.910);transform-origin:0 0;">[Verator 2]</div>
<div class="t" style="left:1200px;top:726px;transform:scaleX(0.947);transform-origin:0 0;">&lt;DIR&gt;</div>
<div class="t" style="left:1254px;top:726px;transform:scaleX(0.971);transform-origin:0 0;">08.05.2015 10:16</div>
<div class="a" style="left:1356px;top:734px;width:16px;height:1px;background:#000"></div>
<svg class="a" style="left:708px;top:743px" width="15" height="14"><use href="#fo"/></svg>
<div class="t" style="left:726px;top:742px;transform:scaleX(0.900);transform-origin:0 0;">[Volkstrum]</div>
<div class="t" style="left:1200px;top:742px;transform:scaleX(0.947);transform-origin:0 0;">&lt;DIR&gt;</div>
<div class="t" style="left:1254px;top:742px;transform:scaleX(0.971);transform-origin:0 0;">08.05.2015 10:16</div>
<div class="a" style="left:1356px;top:750px;width:16px;height:1px;background:#000"></div>
<svg class="a" style="left:708px;top:759px" width="15" height="14"><use href="#fo"/></svg>
<div class="t" style="left:726px;top:758px;transform:scaleX(0.900);transform-origin:0 0;">[Volkstrum one channel]</div>
<div class="t" style="left:1200px;top:758px;transform:scaleX(0.947);transform-origin:0 0;">&lt;DIR&gt;</div>
<div class="t" style="left:1254px;top:758px;transform:scaleX(0.971);transform-origin:0 0;">08.05.2015 10:16</div>
<div class="a" style="left:1356px;top:766px;width:16px;height:1px;background:#000"></div></body></html>
